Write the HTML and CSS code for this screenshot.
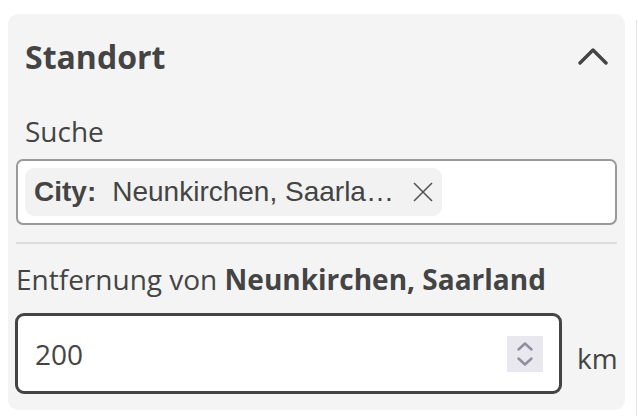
FILE: index.html
```html
<!DOCTYPE html>
<html lang="de">
<head>
<meta charset="utf-8">
<link rel="stylesheet" href="styles.css">
</head>
<body>
<div class="page">
  <section class="panel">
    <div class="head">
      <h2 class="title">Standort</h2>
      <svg class="chev" width="30" height="18" viewBox="0 0 30 18"><path d="M2 16 L15 3 L28 16" fill="none" stroke="#444" stroke-width="3.4" stroke-linecap="round" stroke-linejoin="round"/></svg>
    </div>
    <label class="label">Suche</label>
    <div class="search">
      <span class="chip"><b>City:</b><span class="chip-val">Neunkirchen, Saarla…</span>
        <svg class="x" width="20" height="20" viewBox="0 0 20 20"><path d="M1 1 L19 19 M19 1 L1 19" stroke="#555" stroke-width="1.6" fill="none"/></svg>
      </span>
    </div>
    <hr class="sep">
    <div class="dist-label">Entfernung von <b>Neunkirchen, Saarland</b></div>
    <div class="dist-row">
      <div class="num">
        <span class="val">200</span>
        <span class="spin"><svg width="36" height="36" viewBox="0 0 36 36"><path d="M11.5 13.5 L18 7.5 L24.5 13.5" fill="none" stroke="#8e8ea0" stroke-width="2.4" stroke-linecap="round" stroke-linejoin="round"/><path d="M11.5 22.5 L18 28.5 L24.5 22.5" fill="none" stroke="#8e8ea0" stroke-width="2.4" stroke-linecap="round" stroke-linejoin="round"/></svg></span>
      </div>
      <span class="unit">km</span>
    </div>
  </section>
  <div class="next"></div>
</div>
</body>
</html>
```
FILE: styles.css
```css
html, body { margin: 0; padding: 0; background: #fff; }
body { font-family: "Open Sans", sans-serif; color: #444; }
.page { display: flex; align-items: flex-start; padding-top: 14px; padding-left: 8px; }
.panel {
  width: 617px; height: 396px; box-sizing: border-box; flex-shrink: 0;
  background: #f4f4f4; border-radius: 10px;
  padding: 0 8px; display: flex; flex-direction: column;
}
.next { margin-left: 11px; margin-top: 6px; width: 2px; height: 400px; border-left: 1px solid #e6e6e6; }
.head { display: flex; justify-content: space-between; align-items: center; padding: 21px 9px 0 9px; }
.title { margin: 0; font-size: 32px; line-height: 44px; font-weight: 700; color: #444; }
.chev { display: block; margin-top: -2px; }
.label { font-size: 28px; padding-left: 9px; line-height: 38px; margin-top: 33px; }
.search {
  margin-top: 9px; height: 66px; box-sizing: border-box;
  background: #fff; border: 2px solid #999; border-radius: 7px;
  display: flex; align-items: center; padding-left: 7px;
}
.chip {
  display: inline-flex; align-items: center; height: 48px;
  background: #f2f2f2; border-radius: 9px; padding: 0 9px 0 9px;
  font-family: "Liberation Sans", Arial, sans-serif; font-size: 28px; color: #444;
}
.chip b { font-weight: 700; }
.chip-val { margin-left: 16px; }
.x { margin-left: 19px; }
.sep { border: 0; height: 2px; background: #ddd; margin: 17px 0 0 0; }
.dist-label { font-size: 28px; line-height: 38px; margin-top: 16px; padding-left: 0; }
.dist-label b { font-weight: 700; }
.dist-row { display: flex; align-items: center; margin-top: 15px; }
.num {
  flex-shrink: 0;
  width: 547px; height: 81px; box-sizing: border-box; margin-left: -1px;
  background: #fff; border: 3px solid #444; border-radius: 9px;
  display: flex; align-items: center; justify-content: space-between; padding: 0 16px 0 17px;
}
.val { font-size: 28px; }
.spin { width: 36px; height: 36px; background: #e8e8ee; display: block; }
.spin svg { display: block; }
.unit { font-size: 28px; margin-left: 15px; margin-top: 8px; }
```
